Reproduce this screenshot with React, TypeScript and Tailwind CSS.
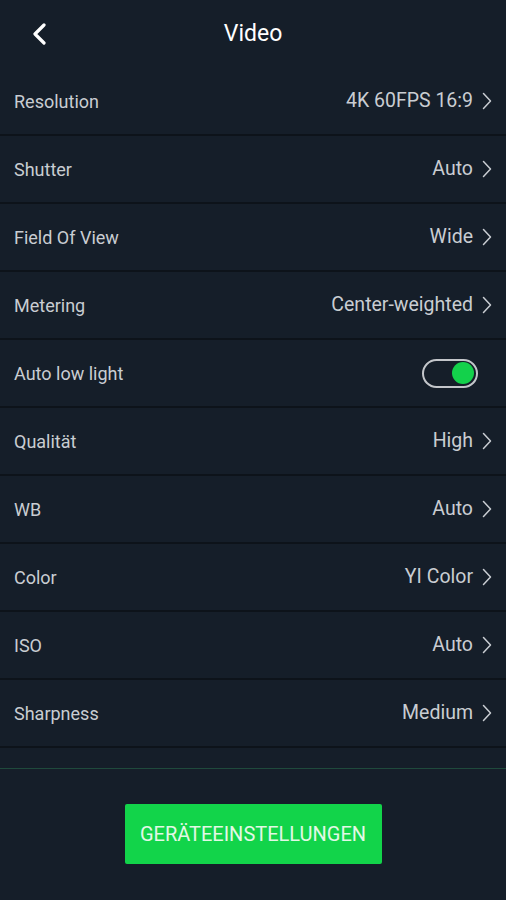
const rows: { label: string; value?: string; toggle?: boolean }[] = [
    { label: "Resolution", value: "4K 60FPS 16:9" },
    { label: "Shutter", value: "Auto" },
    { label: "Field Of View", value: "Wide" },
    { label: "Metering", value: "Center-weighted" },
    { label: "Auto low light", toggle: true },
    { label: "Qualität", value: "High" },
    { label: "WB", value: "Auto" },
    { label: "Color", value: "YI Color" },
    { label: "ISO", value: "Auto" },
    { label: "Sharpness", value: "Medium" },
];

function Chevron() {
    return (
        <svg width="10" height="18" viewBox="0 0 10 18" className="ml-[9px]">
            <path d="M1.5 1.5 L8.5 9 L1.5 16.5" fill="none" stroke="#c9cdd2" strokeWidth="1.5" strokeLinecap="round" strokeLinejoin="round" />
        </svg>
    );
}

export default function App() {
    return (
        <div
            className="w-[506px] h-[900px] bg-[#151e29] flex flex-col text-[#c9cdd2]"
            style={{ fontFamily: "Roboto, 'Noto Sans', sans-serif" }}
        >
            <div className="h-[68px] flex flex-row items-center relative">
                <svg width="16" height="22" viewBox="0 0 16 22" className="ml-[31px]">
                    <path d="M13 2 L4 11 L13 20" fill="none" stroke="#ffffff" strokeWidth="3.2" strokeLinecap="round" strokeLinejoin="round" />
                </svg>
                <span className="absolute left-0 right-0 text-center text-[23px] text-white pointer-events-none">Video</span>
            </div>

            <div className="flex flex-col">
                {rows.map((row) => (
                    <div key={row.label} className="h-[68px] flex flex-row items-center justify-between border-b-2 border-[#0d131a] pl-[14px] pr-[14px]">
                        <span className="text-[18px]">{row.label}</span>
                        {row.toggle ? (
                            <div className="w-[56px] h-[29px] rounded-full border-2 border-[#c3c6ca] flex flex-row items-center justify-end pr-[2px] mr-[14px]">
                                <div className="w-[22px] h-[22px] rounded-full bg-[#13d14b]"></div>
                            </div>
                        ) : (
                            <div className="flex flex-row items-center">
                                <span className="text-[19.5px]">{row.value}</span>
                                <Chevron />
                            </div>
                        )}
                    </div>
                ))}
            </div>

            <div className="h-[20px]"></div>
            <div className="h-[1px] bg-[#1f4a3c]"></div>

            <div className="flex flex-row justify-center pt-[35px]">
                <button className="w-[257px] h-[60px] rounded-[2px] bg-[#12d44a] text-[20px] text-[#e2f8e6]">
                    GERÄTEEINSTELLUNGEN
                </button>
            </div>
        </div>
    );
}
